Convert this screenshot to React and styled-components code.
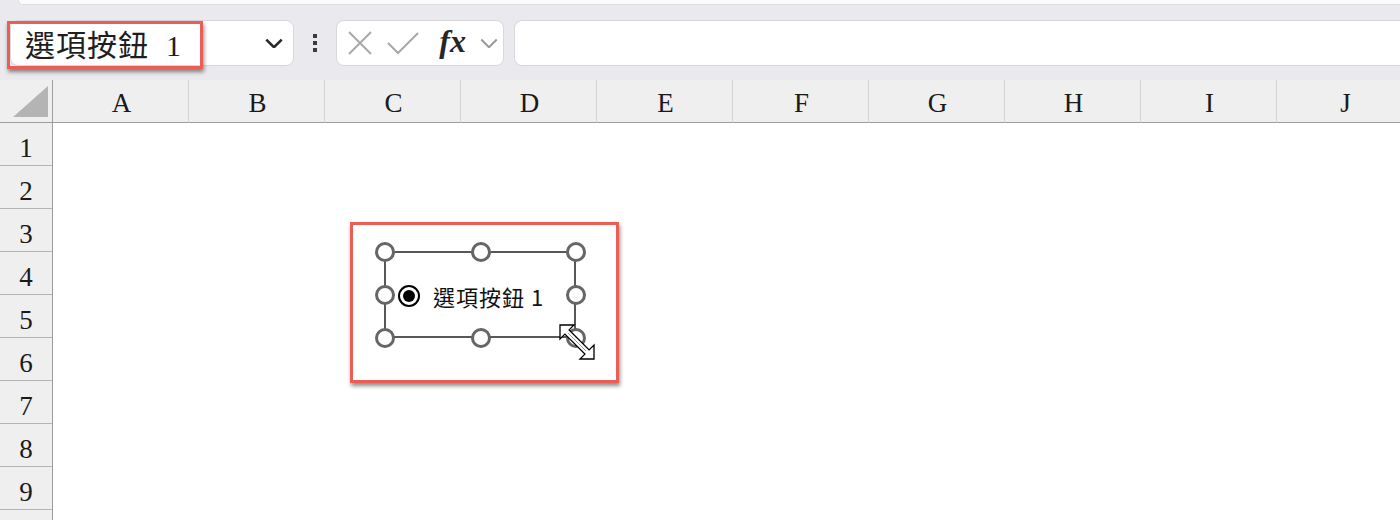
import React from 'react'
import styled, { createGlobalStyle } from 'styled-components';

const GlobalStyle = createGlobalStyle`
  html, body { margin: 0; padding: 0; background: #ffffff; }
  body { width: 1400px; height: 520px; overflow: hidden; font-family: "Liberation Serif", serif; }
`;

const Page = styled.div`
width: 1400px;
height: 520px;
overflow: hidden;
position: relative;
background: #ffffff;
`;

const TopStrip = styled.div`
height: 5px;
background: #eaeaee;
padding-left: 18px;
`;

const TopTab = styled.div`
height: 4px;
background: #fbfbfc;
border-bottom: 1px solid #dedee2;
border-left: 1px solid #dedee2;
border-bottom-left-radius: 10px;
`;

const Toolbar = styled.div`
height: 75px;
box-sizing: border-box;
padding: 15px 0 14px 10px;
background: #eaeaee;
display: flex;
align-items: stretch;
position: relative;
`;

const Box = styled.div`
box-sizing: border-box;
background: #ffffff;
border: 1px solid #d8d8dc;
border-radius: 8px;
display: flex;
align-items: center;
`;

const NameBox = styled(Box)`
width: 284px;
padding: 0 10px 0 14px;
justify-content: space-between;
`;

const NameText = styled.span`
font-family: "Liberation Serif", "Noto Sans CJK TC", serif;
font-size: 30px;
color: #1e1e1e;
letter-spacing: 1px;
white-space: pre;
`;

const Dots = styled.div`
width: 42px;
display: flex;
flex-direction: column;
align-items: center;
justify-content: center;
gap: 3px;
`;

const Dot = styled.span`
width: 4px;
height: 4px;
background: #3c3c3c;
`;

const FormulaIcons = styled(Box)`
width: 168px;
padding: 0 5px 0 10px;
justify-content: space-between;
`;

const Fx = styled.span`
font-family: "Liberation Serif", serif;
font-style: italic;
font-weight: 700;
font-size: 32px;
color: #262626;
margin: -4px 0 0 6px;
`;

const FormulaBar = styled(Box)`
flex: 1;
margin-left: 10px;
border-right: none;
border-top-right-radius: 0;
border-bottom-right-radius: 0;
`;

const Highlight = styled.div`
position: absolute;
box-sizing: border-box;
left: ${p => p.x}px;
top: ${p => p.y}px;
width: ${p => p.w}px;
height: ${p => p.h}px;
border: 3px solid #ec5e55;
box-shadow: 1px 3px 4px rgba(0,0,0,0.45);
pointer-events: none;
`;

const Sheet = styled.div`
position: relative;
`;

const Grid = styled.div`
display: grid;
grid-template-columns: 53px repeat(10, 136px);
grid-auto-rows: 43px;
`;

const Corner = styled.div`
box-sizing: border-box;
background: #efefef;
border-right: 1px solid #9c9c9c;
border-bottom: 1px solid #9c9c9c;
display: flex;
align-items: flex-end;
justify-content: flex-end;
padding: 0 4px 5px 0;
`;

const ColHead = styled.div`
box-sizing: border-box;
background: #efefef;
border-right: 1px solid #d4d4d4;
border-bottom: 1px solid #9c9c9c;
display: flex;
align-items: center;
justify-content: center;
font-size: 27px;
color: #1a1a1a;
padding: 5px 0 0 2px;
`;

const RowHead = styled.div`
box-sizing: border-box;
background: #efefef;
border-right: 1px solid #9c9c9c;
border-bottom: 1px solid #b4b4b4;
display: flex;
align-items: center;
justify-content: center;
font-size: 27px;
color: #1a1a1a;
padding-top: 8px;
`;

const Cell = styled.div`
background: #ffffff;
`;

const Frame = styled.div`
position: absolute;
box-sizing: border-box;
left: 384px;
top: 171px;
width: 192px;
height: 87px;
border: 2px solid #585858;
`;

const Handle = styled.span`
position: absolute;
box-sizing: border-box;
width: 20px;
height: 20px;
left: ${p => p.x}px;
top: ${p => p.y}px;
margin: -11px 0 0 -11px;
border-radius: 50%;
border: 3px solid #666666;
background: #ffffff;
`;

const Control = styled.div`
position: absolute;
left: 398px;
top: 200px;
display: flex;
align-items: center;
gap: 13px;
`;

const Radio = styled.span`
width: 22px;
height: 22px;
box-sizing: border-box;
border-radius: 50%;
border: 2px solid #000;
display: flex;
align-items: center;
justify-content: center;
background: #fff;
&::after {
  content: "";
  width: 12px;
  height: 12px;
  border-radius: 50%;
  background: #000;
}
`;

const Label = styled.span`
font-family: "Noto Sans CJK TC", "Noto Sans", sans-serif;
font-size: 22px;
letter-spacing: 1px;
color: #111;
white-space: pre;
`;

const Cursor = styled.svg`
position: absolute;
left: 559px;
top: 244px;
`;

const columns = ['A', 'B', 'C', 'D', 'E', 'F', 'G', 'H', 'I', 'J'];
const rows = [1, 2, 3, 4, 5, 6, 7, 8, 9, ''];
const handles = [
  [0, 0], [96, 0], [191, 0],
  [0, 43], [191, 43],
  [0, 86], [96, 86], [191, 86],
];

const Chevron = ({ size = 14, color = '#333', width = 1.8 }) => (
  <svg width={size} height={size * 0.6} viewBox="0 0 14 8">
    <path d="M1 1 L7 7 L13 1" fill="none" stroke={color} strokeWidth={width} />
  </svg>
);

export default function App() {
  return (
    <Page>
      <GlobalStyle />
      <TopStrip><TopTab /></TopStrip>
      <Toolbar>
        <NameBox>
          <NameText>選項按鈕  1</NameText>
          <Chevron size={18} color="#2a2a2a" width={2} />
        </NameBox>
        <Dots><Dot /><Dot /><Dot /></Dots>
        <FormulaIcons>
          <svg width="26" height="26" viewBox="0 0 26 26">
            <path d="M2 2 L24 24 M24 2 L2 24" stroke="#a8a8a8" strokeWidth="2" fill="none" />
          </svg>
          <svg width="32" height="24" viewBox="0 0 32 24">
            <path d="M1 12 L11 22 L31 2" stroke="#a8a8a8" strokeWidth="2" fill="none" />
          </svg>
          <Fx>fx</Fx>
          <Chevron size={18} color="#9a9a9a" width={1.6} />
        </FormulaIcons>
        <FormulaBar />
        <Highlight x={7} y={16} w={196} h={48} />
      </Toolbar>
      <Sheet>
        <Grid>
          <Corner>
            <svg width="35" height="31" viewBox="0 0 35 31">
              <path d="M35 0 L35 31 L0 31 Z" fill="#b4b4b4" />
            </svg>
          </Corner>
          {columns.map(c => <ColHead key={c}>{c}</ColHead>)}
          {rows.map((r, i) => (
            <React.Fragment key={i}>
              <RowHead>{r}</RowHead>
              {columns.map(c => <Cell key={c} />)}
            </React.Fragment>
          ))}
        </Grid>
        <Frame>
          {handles.map(([x, y], i) => <Handle key={i} x={x} y={y} />)}
        </Frame>
        <Control>
          <Radio />
          <Label>選項按鈕 1</Label>
        </Control>
        <Cursor width="38" height="38" viewBox="0 0 38 38">
          <polygon
            points="1,1 15,1 10.1,5.9 30.1,25.9 35,21 35,35 21,35 25.9,30.1 5.9,10.1 1,15"
            fill="#ffffff" stroke="#000000" strokeWidth="1.3" strokeLinejoin="miter" />
          <path d="M9 9 L27 27" stroke="#9a9a9a" strokeWidth="1" />
        </Cursor>
        <Highlight x={350} y={142} w={269} h={161} />
      </Sheet>
    </Page>
  );
}
